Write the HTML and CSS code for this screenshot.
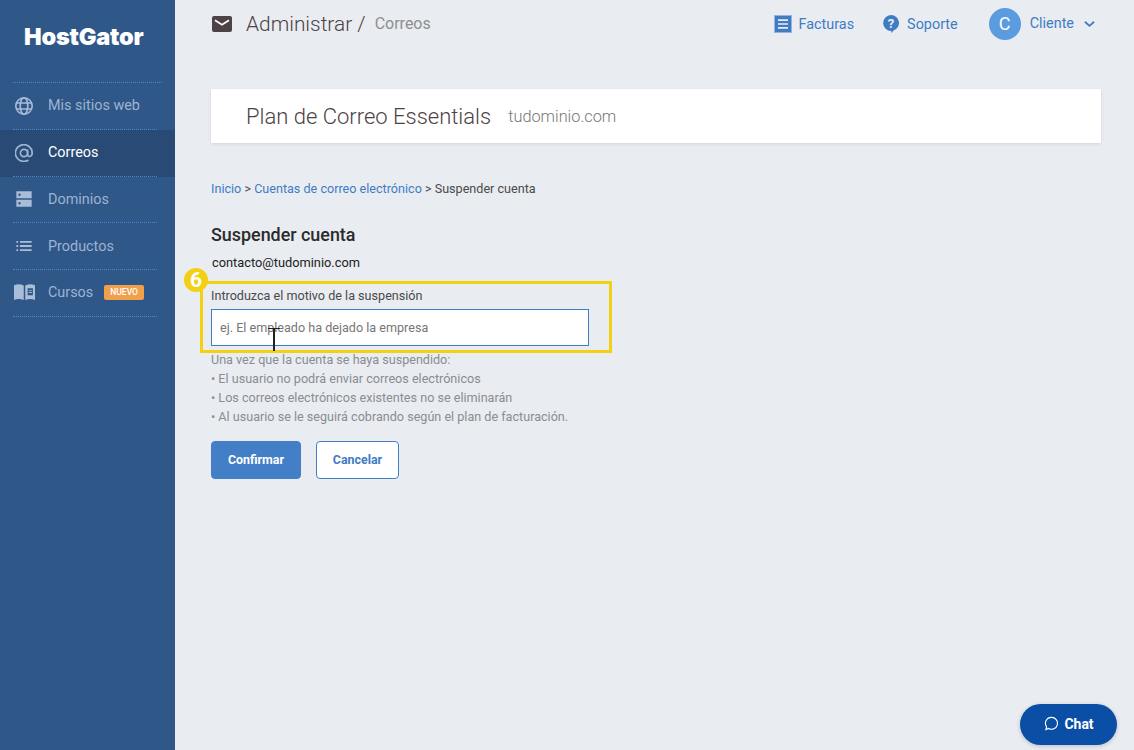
FILE: index.html
```html
<!DOCTYPE html>
<html lang="es">
<head>
<meta charset="utf-8">
<title>Suspender cuenta</title>
<link rel="stylesheet" href="styles.css">
</head>
<body>
<div class="app">
  <aside class="sidebar">
    <div class="logo">HostGator</div>
    <nav class="nav">
      <a class="nav-item">
        <svg class="nav-icon" viewBox="1 1 18 18" fill="none" stroke="currentColor" stroke-width="1.6"><circle cx="10" cy="10" r="8.2"/><ellipse cx="10" cy="10" rx="3.8" ry="8.2"/><path d="M2.4 7h15.2M2.4 13h15.2"/></svg>
        <span>Mis sitios web</span>
      </a>
      <a class="nav-item active">
        <svg class="nav-icon" viewBox="1 1 18 18" fill="none" stroke="currentColor" stroke-width="1.7"><circle cx="10" cy="10" r="3.6"/><path d="M13.6 6.4v5c0 3 4.6 3 4.6-1.400A8.400 8.400 0 1 0 14.500 17"/></svg>
        <span>Correos</span>
      </a>
      <a class="nav-item">
        <svg class="nav-icon" viewBox="0 0 20 20" fill="currentColor"><path fill-rule="evenodd" d="M1.500 1.500h17v7.700h-17zM1.500 10.800h17v7.700h-17zM5 4a1.300 1.300 0 1 0 0 2.600A1.300 1.300 0 0 0 5 4zM5 13.400a1.300 1.300 0 1 0 0 2.600 1.300 1.300 0 0 0 0-2.600z"/></svg>
        <span>Dominios</span>
      </a>
      <a class="nav-item">
        <svg class="nav-icon" viewBox="0 0 20 20" fill="currentColor"><path d="M1.500 4.500h2v2h-2zM1.500 9h2v2h-2zM1.500 13.500h2v2h-2zM5.500 4.500h13v2h-13zM5.500 9h13v2h-13zM5.500 13.500h13v2h-13z"/></svg>
        <span>Productos</span>
      </a>
      <a class="nav-item">
        <svg class="nav-icon book" viewBox="1 2 20 16" fill="currentColor"><path fill-rule="evenodd" d="M1 3.500c3-1.200 6-1.200 9.300.2v14c-3.300-1.400-6.300-1.400-9.300-.2zM11.700 3.700c3.300-1.400 6.300-1.400 9.300-.2v14c-3-1.200-6-1.200-9.300.2zM14 6.500v6.500h5V6.500zM15 8h3v.9h-3zM15 10h3v.9h-3z"/></svg>
        <span>Cursos</span>
        <span class="tag">NUEVO</span>
      </a>
    </nav>
  </aside>

  <main class="main">
    <header class="topbar">
      <div class="crumb-title">
        <svg class="mail-icon" viewBox="0 0 20 16"><rect width="20" height="16" rx="2" fill="#4d4245"/><path d="M3 4.200l7 4.600 7-4.600" fill="none" stroke="#fff" stroke-width="1.700"/></svg>
        <span class="title">Administrar /</span>
        <span class="subtitle">Correos</span>
      </div>
      <div class="top-links">
        <a class="top-link">
          <svg class="top-icon bill" viewBox="0 0 18 18"><path fill="#3f7cc4" d="M1 1h16v16H1z"/><path fill="none" stroke="#3f7cc4" stroke-width="1" stroke-dasharray="1 1" d="M.5.5h17v17H.5z"/><path stroke="#eaedf2" stroke-width="1.700" d="M4 5.200h10M4 9h10M4 12.800h10"/></svg>
          <span class="top-label">Facturas</span>
        </a>
        <a class="top-link">
          <svg class="top-icon help" viewBox="0 0 16 18"><path fill="#3f7cc4" d="M8 0a8 8 0 0 1 2.200 15.700c-.4 1-1 1.700-1.900 2.300v-2A8 8 0 0 1 8 0z"/><text x="8" y="12.800" text-anchor="middle" class="q-mark">?</text></svg>
          <span class="top-label">Soporte</span>
        </a>
        <a class="user">
          <span class="avatar">C</span>
          <span class="user-name">Cliente</span>
          <svg class="chev" viewBox="0 0 12 8" fill="none" stroke="#3f7cc4" stroke-width="2"><path d="M1 1.500l5 4.500 5-4.500"/></svg>
        </a>
      </div>
    </header>

    <section class="plan-card">
      <h1 class="plan-name">Plan de Correo Essentials</h1>
      <span class="plan-domain">tudominio.com</span>
    </section>

    <p class="breadcrumb"><a>Inicio</a> &gt; <a>Cuentas de correo electrónico</a> &gt; Suspender cuenta</p>

    <h2 class="heading">Suspender cuenta</h2>
    <p class="email">contacto@tudominio.com</p>

    <form class="form">
      <label class="label" for="motivo">Introduzca el motivo de la suspensión</label>
      <input class="input" id="motivo" type="text" placeholder="ej. El empleado ha dejado la empresa">
      <div class="notes">
        <p>Una vez que la cuenta se haya suspendido:</p>
        <p>• El usuario no podrá enviar correos electrónicos</p>
        <p>• Los correos electrónicos existentes no se eliminarán</p>
        <p>• Al usuario se le seguirá cobrando según el plan de facturación.</p>
      </div>
      <div class="actions">
        <button class="btn primary" type="button">Confirmar</button>
        <button class="btn secondary" type="button">Cancelar</button>
      </div>
    </form>
  </main>
</div>

<div class="highlight"></div>
<div class="step">6</div>
<div class="text-cursor"></div>
<button class="chat" type="button">
  <svg class="chat-icon" viewBox="0 0 16 16" fill="none" stroke="#fff" stroke-width="1.200"><path d="M8 1.500a6.300 6.300 0 1 1-3 11.800L2 14.500l.8-3A6.300 6.300 0 0 1 8 1.500z"/></svg>
  <span>Chat</span>
</button>
</body>
</html>
```
FILE: styles.css
```css
* { box-sizing: border-box; }
html, body { margin: 0; height: 100%; overflow: hidden; }
body { font-family: Roboto, "Liberation Sans", sans-serif; background: #e9ecf1; color: #333; }
p, h1, h2 { margin: 0; font-weight: 400; }

.app { display: flex; height: 750px; }

.sidebar { width: 175px; flex: none; background: #2f5788; }
.logo { height: 82px; padding: 24px 0 0 24px; color: #fff; font-family: Inter, "Open Sans", sans-serif; font-weight: 900; font-size: 23.500px; line-height: 26px; letter-spacing: -0.2px; }
.nav { border-top: 1px dotted #4a86cf; margin: 0 13px; }
.nav-item { display: flex; align-items: center; height: 46.800px; margin: 0 -13px; padding: 0 13px 1px 15px; color: #9db3d2; font-size: 14.400px; position: relative; }
.nav-item:last-child { padding-bottom: 3px; }
.nav-item::after { content: ""; position: absolute; left: 13px; right: 18px; bottom: 0; border-bottom: 1px dotted #4a86cf; }
.nav-item.active { background: #284a75; color: #fff; }
.nav-item.active .nav-icon { color: #9db3d2; }
.nav-icon { width: 18px; height: 18px; margin-right: 15px; flex: none; color: #a9bcd8; }
.nav-icon.book { width: 21px; height: 18px; margin: 0 13px 0 -1px; }
.tag { margin-left: 11px; background: #f0a04b; color: #fff; font-size: 8.500px; font-weight: 500; line-height: 15px; height: 15px; padding: 0 6px; border-radius: 2px; }

.main { flex: 1; padding: 0 33px 0 36px; min-width: 0; }
.topbar { display: flex; align-items: center; justify-content: space-between; height: 47px; margin-bottom: 42px; }
.crumb-title { display: flex; align-items: center; }
.mail-icon { width: 20px; height: 16px; margin: 0 14px 0 1px; }
.title { font-size: 20.900px; font-weight: 300; color: #4d4245; margin-right: 9px; }
.subtitle { font-size: 16px; color: #8e8e8e; }
.top-links { display: flex; align-items: center; margin-right: 6px; }
.top-link { display: flex; align-items: center; color: #3f7cc4; font-size: 14.400px; margin-right: 29px; }
.top-link + .top-link { margin-right: 31px; }
.top-label { margin-top: 1px; }
.top-icon { margin-right: 8px; }
.top-icon.bill { width: 18px; height: 18px; margin-left: -1px; margin-right: 7px; }
.top-icon.help { width: 16px; height: 18px; }
.q-mark { font: 700 13px Roboto, sans-serif; fill: #eaedf2; }
.user { display: flex; align-items: center; color: #3f7cc4; font-size: 14.400px; }
.avatar { width: 32px; height: 32px; border-radius: 50%; background: #5b9bdf; color: #fff; font-size: 18px; font-weight: 400; display: flex; align-items: center; justify-content: center; margin-right: 9px; }
.user-name { margin-top: -1px; }
.chev { width: 11px; height: 8px; margin-left: 10px; }

.plan-card { height: 54px; background: #fff; display: flex; align-items: center; padding-left: 35px; box-shadow: 0 1px 3px rgba(0,0,0,.1); }
.plan-name { font-size: 22px; font-weight: 300; color: #4d4245; margin-right: 17px; }
.plan-domain { font-size: 16.300px; font-weight: 300; color: #777; }

.breadcrumb { margin-top: 38px; font-size: 12.600px; line-height: 15px; color: #4a4a4a; }
.breadcrumb a { color: #3f7cc4; }
.heading { margin-top: 28px; font-size: 17.900px; font-weight: 500; line-height: 22px; color: #2b2b2b; }
.email { margin: 9px 0 0 1px; font-size: 12.800px; line-height: 16px; color: #222; }

.form { margin-top: 17px; }
.label { display: block; font-size: 12.600px; line-height: 16px; color: #4a4a4a; }
.input { display: block; width: 378px; height: 37px; margin-top: 5px; padding: 0 8px; border: 1px solid #3f7cc4; border-radius: 0; background: #fff; font: 12.600px Roboto, sans-serif; outline: none; }
.input::placeholder { color: #777; opacity: 1; }
.notes { margin-top: 4px; font-size: 12.600px; line-height: 19px; color: #8a8d92; }
.actions { display: flex; margin-top: 15px; gap: 15px; }
.btn { height: 38px; padding: 0 0 1px; border-radius: 4px; font: 700 12.400px Roboto, sans-serif; }
.btn.primary { width: 90px; background: #437fc6; border: 1px solid #437fc6; color: #fff; }
.btn.secondary { width: 83px; background: #fff; border: 1px solid #437fc6; color: #3f7cc4; }

.highlight { position: absolute; left: 200px; top: 281px; width: 412px; height: 72px; border: 3px solid #f3d012; }
.step { position: absolute; left: 184px; top: 268px; width: 24px; height: 24px; border-radius: 50%; background: #f3d012; color: #fff; font-size: 21px; font-weight: 700; line-height: 24px; text-align: center; }
.text-cursor { position: absolute; left: 273px; top: 328px; width: 2px; height: 23px; background: #222; }
.text-cursor::before { content: ""; position: absolute; left: -5px; top: 0; width: 12px; height: 1px; background: #222; }

.chat { position: absolute; left: 1020px; top: 704px; width: 97px; height: 41px; padding: 0 0 2px 1px; border: 0; border-radius: 21px; background: #0a4ea6; color: #fff; font: 700 14px Roboto, sans-serif; display: flex; align-items: center; justify-content: center; gap: 5px; box-shadow: 0 1px 4px rgba(0,0,0,.2); }
.chat-icon { width: 15px; height: 15px; }
```
